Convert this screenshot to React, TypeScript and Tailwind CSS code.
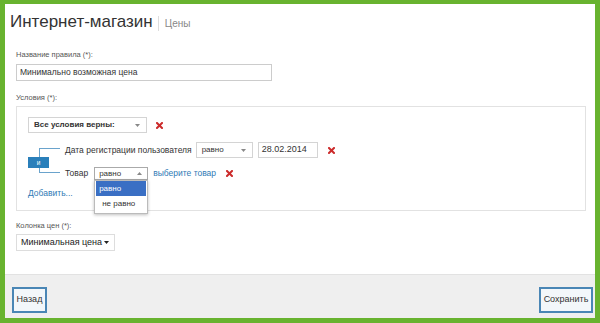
const font = { fontFamily: '"Liberation Sans", Arial, sans-serif' };

function RemoveIcon() {
  return (
    <svg width="7" height="7" viewBox="0 0 7 7" className="shrink-0">
      <path d="M1 1 L6 6 M6 1 L1 6" stroke="#cc2b2b" strokeWidth="2" strokeLinecap="square" />
    </svg>
  );
}

function Caret({ up = false, dark = false }: { up?: boolean; dark?: boolean }) {
  return (
    <svg width="5" height="3" viewBox="0 0 5 3" className="shrink-0">
      <path d={up ? "M0 3 L2.5 0 L5 3 Z" : "M0 0 L5 0 L2.5 3 Z"} fill={dark ? "#222" : "#888"} />
    </svg>
  );
}

export default function App() {
  return (
    <div
      className="w-[600px] h-[323px] bg-[#68b32f] pt-[4px] pl-[5px] pr-[5px] pb-[5px] text-[#333]"
      style={font}
    >
      <div className="h-full bg-white flex flex-col">
        <div className="flex-1 flex flex-col">
          {/* Header */}
          <div className="flex items-center pl-[5px] mt-[8px] h-[20px]">
            <span className="text-[17px] leading-[20px] text-[#333]">Интернет-магазин</span>
            <span className="w-px h-[15px] bg-[#ddd] ml-[5px] mr-[6px] mt-[3px]" />
            <span className="text-[10px] leading-[12px] text-[#888] mt-[4px]">Цены</span>
          </div>

          <div className="pl-[11px] pr-[9px]">
            <div className="text-[7.5px] leading-[10px] text-[#555] mt-[18px]">Название правила (*):</div>
            <div className="mt-[4px] w-[256px] h-[17px] border border-[#ccc] flex items-center px-[3px] text-[8.5px]">
              Минимально возможная цена
            </div>

            <div className="text-[7.5px] leading-[10px] text-[#555] mt-[12px]">Условия (*):</div>
            <div className="mt-[3px] h-[105px] border border-[#e2e2e2] pl-[11px] pt-[10px]">
              <div className="flex items-center gap-[9px]">
                <div className="w-[119px] h-[16px] border border-[#d4d4d4] flex items-center justify-between pl-[5px] pr-[6px] text-[8px] font-bold text-[#333]">
                  <span>Все условия верны:</span>
                  <Caret />
                </div>
                <RemoveIcon />
              </div>

              <div className="flex mt-[9px]">
                {/* connector */}
                <div className="relative w-[37px] h-[38px]">
                  <div className="absolute left-[11px] top-[6px] w-[21px] h-[25px] border-l border-t border-b border-[#6aa3cc]" />
                  <div className="absolute left-0 top-[15px] w-[21px] h-[11px] bg-[#2a7fba] text-white text-[6.5px] leading-[11px] text-center">
                    и
                  </div>
                </div>
                <div className="flex flex-col">
                  <div className="flex items-center h-[16px] text-[8.5px]">
                    <span>Дата регистрации пользователя</span>
                    <div className="ml-[4px] w-[57px] h-[16px] border border-[#d4d4d4] flex items-center justify-between pl-[5px] pr-[6px] text-[8px]">
                      <span>равно</span>
                      <Caret />
                    </div>
                    <div className="ml-[5px] w-[60px] h-[16px] border border-[#d4d4d4] flex items-center px-[3px] text-[9px]">
                      28.02.2014
                    </div>
                    <span className="ml-[10px] flex">
                      <RemoveIcon />
                    </span>
                  </div>
                  <div className="flex items-center h-[13px] mt-[9px] text-[8.5px]">
                    <span>Товар</span>
                    <div className="relative ml-[6px]">
                      <div className="w-[54px] h-[13px] border border-[#aaa] flex items-center justify-between pl-[4px] pr-[5px] text-[8px]">
                        <span>равно</span>
                        <Caret up />
                      </div>
                      <div className="absolute left-0 top-[13px] w-[54px] border border-[#bbb] bg-white shadow-[0_1px_3px_rgba(0,0,0,0.25)] px-px text-[8px] z-10">
                        <div className="h-[15px] bg-[#3a6fc4] text-white px-[3px] leading-[15px]">равно</div>
                        <div className="h-[17px] px-[6px] leading-[16px]">не равно</div>
                      </div>
                    </div>
                    <span className="ml-[5px] text-[#2f7ab5]">выберите товар</span>
                    <span className="ml-[10px] flex">
                      <RemoveIcon />
                    </span>
                  </div>
                </div>
              </div>
              <div className="text-[8.5px] leading-[12px] text-[#2f7ab5] mt-[7px]">Добавить...</div>
            </div>

            <div className="text-[7.5px] leading-[10px] text-[#555] mt-[10px]">Колонка цен (*):</div>
            <div className="mt-[3px] w-[99px] h-[17px] border border-[#ddd] flex items-center justify-between pl-[4px] pr-[5px] text-[9px] text-[#222] whitespace-nowrap">
              <span>Минимальная цена</span>
              <Caret dark />
            </div>
          </div>
        </div>

        {/* Footer */}
        <div className="h-[44px] bg-[#efefef] border-t border-[#e2e2e2] flex items-start justify-between pl-[7px] pr-[2px] pt-[12px]">
          <button className="w-[35px] h-[26px] border-2 border-[#4a86b5] bg-[#f3f7fa] text-[9px] text-[#333]">
            Назад
          </button>
          <button className="w-[54px] h-[26px] border-2 border-[#4a86b5] bg-[#f3f7fa] text-[9px] text-[#333]">
            Сохранить
          </button>
        </div>
      </div>
    </div>
  );
}
